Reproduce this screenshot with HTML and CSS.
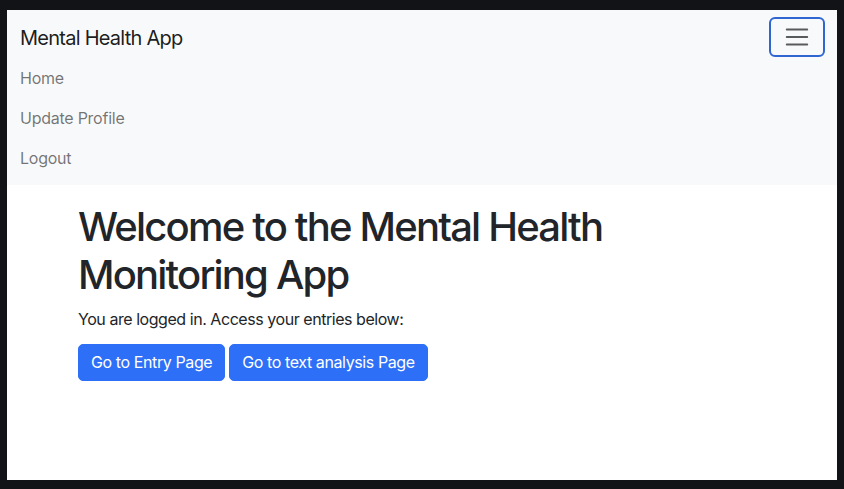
FILE: index.html
```html
<!DOCTYPE html>
<html lang="en">
<head>
<meta charset="utf-8">
<title>Mental Health App</title>
<link rel="stylesheet" href="styles.css">
</head>
<body>
<div class="page">
  <nav class="navbar">
    <div class="navbar-top">
      <a class="brand" href="#">Mental Health App</a>
      <button class="toggler" type="button" aria-label="Toggle navigation">
        <svg class="toggler-icon" viewBox="0 0 30 30" width="30" height="30" aria-hidden="true">
          <path d="M4 7h22M4 15h22M4 23h22" stroke="rgba(33,37,41,0.75)" stroke-width="2" stroke-linecap="round" fill="none"/>
        </svg>
      </button>
    </div>
    <ul class="nav-list">
      <li><a class="nav-link" href="#">Home</a></li>
      <li><a class="nav-link" href="#">Update Profile</a></li>
      <li><a class="nav-link" href="#">Logout</a></li>
    </ul>
  </nav>
  <main class="container">
    <h1 class="title">Welcome to the Mental Health Monitoring App</h1>
    <p class="lead-text">You are logged in. Access your entries below:</p>
    <div class="actions">
      <a class="btn" href="#">Go to Entry Page</a>
      <a class="btn" href="#">Go to text analysis Page</a>
    </div>
  </main>
</div>
</body>
</html>
```

FILE: styles.css
```css
html, body {
  margin: 0;
  padding: 0;
}
body {
  background: #121317;
  padding: 10px 7px 9px 7px;
  font-family: Inter, "Liberation Sans", sans-serif;
  font-size: 16px;
  line-height: 1.5;
  color: #212529;
}
.page {
  background: #ffffff;
  height: 470px;
  overflow: hidden;
}
.navbar {
  background: #f8f9fa;
  padding: 8px 12px 7px 12px;
}
.navbar-top {
  display: flex;
  justify-content: space-between;
  align-items: center;
}
.brand {
  font-size: 20px;
  line-height: 30px;
  padding: 5px 0 5px 1px;
  color: rgba(0, 0, 0, 0.9);
  text-decoration: none;
  letter-spacing: -0.75px;
}
.toggler {
  display: flex;
  align-items: center;
  justify-content: center;
  box-sizing: border-box;
  width: 56px;
  height: 40px;
  padding: 4px 12px;
  background: transparent;
  border: 2px solid #2f66d2;
  border-radius: 6px;
  margin-top: -2px;
}
.toggler-icon {
  display: block;
  width: 30px;
  height: 30px;
}
.nav-list {
  list-style: none;
  margin: 0;
  padding: 0;
}
.nav-link {
  display: block;
  padding: 8px 0 8px 1px;
  line-height: 24px;
  color: rgba(0, 0, 0, 0.55);
  text-decoration: none;
  letter-spacing: -0.25px;
}
.container {
  width: 696px;
  padding: 18px 0 0 71px;
}
.title {
  margin: 0 0 8px 0;
  font-size: 40px;
  font-weight: 500;
  line-height: 1.2;
  letter-spacing: -1.8px;
}
.lead-text {
  margin: 0 0 13px 0;
  letter-spacing: -0.45px;
}
.actions {
  display: flex;
  gap: 4px;
}
.btn {
  display: inline-block;
  padding: 6px 12px;
  line-height: 23px;
  font-size: 16px;
  color: #ffffff;
  background: #2d6ff7;
  border: 1px solid #2d6ff7;
  border-radius: 5px;
  text-decoration: none;
  letter-spacing: -0.4px;
}
```
